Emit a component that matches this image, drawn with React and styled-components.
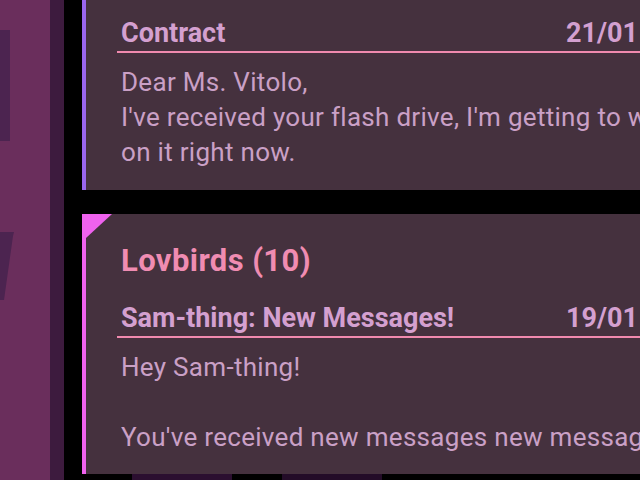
import React from 'react';
import styled, { createGlobalStyle } from 'styled-components';

const GlobalStyle = createGlobalStyle`
  html, body {
    margin: 0;
    padding: 0;
    background: #000;
    overflow: hidden;
  }
  * { box-sizing: border-box; }
`;

const Screen = styled.div`
  width: 640px;
  height: 480px;
  display: grid;
  grid-template-columns: 50px 14px 18px 1fr;
  overflow: hidden;
  font-family: Roboto, "Open Sans", sans-serif;
`;

const Wall = styled.div`
  background: #6a2e5c;
  height: 100%;
`;

const Trim = styled.div`
  background: #3d1b3e;
  height: 100%;
`;

const Gutter = styled.div`
  background: #000;
  height: 100%;
`;

const Feed = styled.div`
  display: flex;
  flex-direction: column;
  gap: 24px;
  background:
    linear-gradient(90deg, #000 0 50px, #2b0f30 50px 150px, #000 150px 200px, #230c28 200px 300px, #000 300px 100%)
      0 474px / 100% 6px no-repeat,
    #000;
  overflow: hidden;
`;

const Card = styled.section`
  position: relative;
  background: #45313e;
  border-left: 4px solid ${p => p.$accent};
  padding: ${p => p.$pad};
  height: ${p => p.$h}px;
  flex-shrink: 0;

  ${p => p.$corner && `
    &::before {
      content: '';
      position: absolute;
      left: 0;
      top: 0;
      width: 26px;
      height: 24px;
      background: ${p.$accent};
      clip-path: polygon(0 0, 100% 0, 0 100%);
    }
  `}
`;

const Thread = styled.h2`
  margin: 0 0 21px 0;
  font-size: 31px;
  font-weight: 700;
  color: #f08cb2;
  line-height: 36px;
  letter-spacing: 0.4px;
`;

const Header = styled.div`
  display: flex;
  justify-content: space-between;
  align-items: baseline;
  margin-left: -4px;
  padding-left: 4px;
  border-bottom: 2px solid #f08aae;
  white-space: nowrap;
`;

const Subject = styled.span`
  font-size: 27px;
  font-weight: 700;
  color: #d4a0d0;
  line-height: 36px;
`;

const Date = styled(Subject)`
  margin-right: 2px;
`;

const Body = styled.p`
  margin: 12px 0 0 0;
  font-size: 26px;
  line-height: 35px;
  letter-spacing: 0.3px;
  color: #caa0c6;
  white-space: nowrap;
  overflow: hidden;
`;

const Sketch = () => (
  <svg width="50" height="480" viewBox="0 0 50 480" style={{ display: 'block' }}>
    <rect width="50" height="480" fill="#6a2e5c" />
    <rect x="0" y="30" width="10" height="111" fill="#4c2450" />
    <path d="M0 232 H14 L13 236 L4 300 H0 Z" fill="#4c2450" />
  </svg>
);

export default function App() {
  return (
    <>
      <GlobalStyle />
      <Screen>
        <Wall><Sketch /></Wall>
        <Trim />
        <Gutter />
        <Feed>
          <Card $accent="#9a66ee" $pad="15px 0 0 35px" $h={190}>
            <Header>
              <Subject>Contract</Subject>
              <Date>21/01</Date>
            </Header>
            <Body>
              Dear Ms. Vitolo,<br />
              I've received your flash drive, I'm getting to work<br />
              on it right now.
            </Body>
          </Card>
          <Card $accent="#ef62ee" $pad="29px 0 0 35px" $h={260} $corner>
            <Thread>Lovbirds (10)</Thread>
            <Header>
              <Subject>Sam-thing: New Messages!</Subject>
              <Date>19/01</Date>
            </Header>
            <Body>
              Hey Sam-thing!<br />
              <br />
              You've received new messages new messages
            </Body>
          </Card>
        </Feed>
      </Screen>
    </>
  );
}
